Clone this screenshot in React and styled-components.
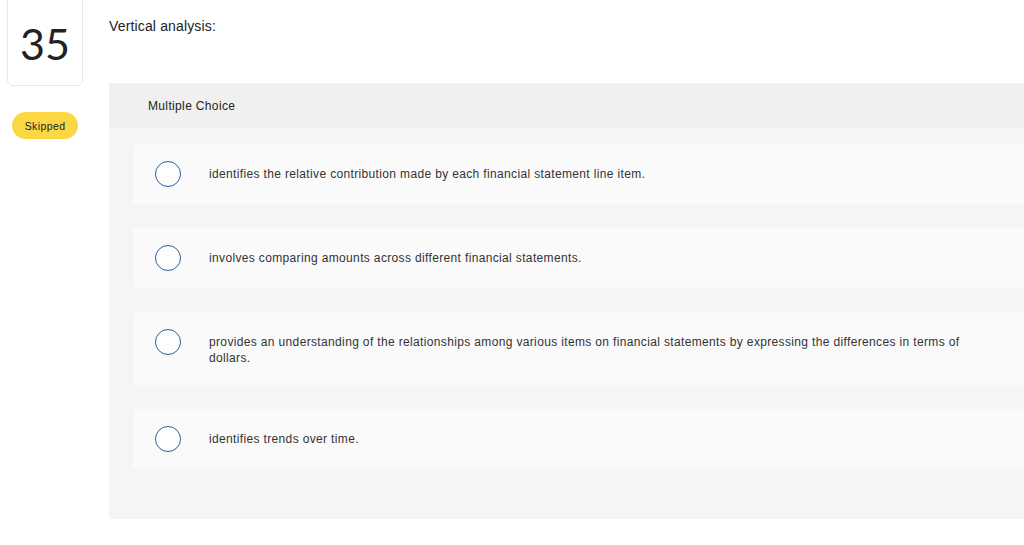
import React from 'react';
import styled, { createGlobalStyle } from 'styled-components';

const GlobalStyle = createGlobalStyle`
  html, body {
    margin: 0;
    padding: 0;
    background: #fff;
    overflow: hidden;
  }
  body {
    font-family: "Liberation Sans", Arial, sans-serif;
    color: #333;
  }
`;

const options = [
  'identifies the relative contribution made by each financial statement line item.',
  'involves comparing amounts across different financial statements.',
  'provides an understanding of the relationships among various items on financial statements by expressing the differences in terms of dollars.',
  'identifies trends over time.',
];

const App = () => {
  return (
    <>
      <GlobalStyle />
      <Page>
        <Side>
          <NumberCard>35</NumberCard>
          <StatusPill>Skipped</StatusPill>
        </Side>
        <Main>
          <Prompt>Vertical analysis:</Prompt>
          <Panel>
            <PanelHeader>Multiple Choice</PanelHeader>
            <OptionList>
              {options.map((text) => (
                <Option key={text}>
                  <Radio />
                  <OptionText>{text}</OptionText>
                </Option>
              ))}
            </OptionList>
          </Panel>
        </Main>
      </Page>
    </>
  );
};

export default App;

const Page = styled.div`
  display: flex;
  width: 1024px;
  height: 545px;
  overflow: hidden;
`;

const Side = styled.div`
  flex: 0 0 109px;
  display: flex;
  flex-direction: column;
  padding-left: 7px;
  box-sizing: border-box;
`;

const NumberCard = styled.div`
  width: 76px;
  height: 96px;
  margin-top: -10px;
  box-sizing: border-box;
  border: 1px solid #e6e6e6;
  border-radius: 6px;
  display: flex;
  align-items: center;
  justify-content: center;
  padding-top: 10px;
  font-family: "Lato", sans-serif;
  font-size: 43px;
  font-weight: 400;
  color: #222;
`;

const StatusPill = styled.div`
  margin: 26px 0 0 5px;
  width: 66px;
  height: 27px;
  border-radius: 14px;
  background: #fbd744;
  display: flex;
  align-items: center;
  justify-content: center;
  font-size: 10.5px;
  letter-spacing: 0.4px;
  color: #222;
`;

const Main = styled.div`
  flex: 0 0 960px;
  display: flex;
  flex-direction: column;
`;

const Prompt = styled.div`
  font-size: 14px;
  letter-spacing: 0.15px;
  line-height: 20px;
  padding-top: 16px;
  height: 83px;
  box-sizing: border-box;
  color: #222;
`;

const Panel = styled.div`
  background: #f5f5f5;
  border-radius: 3px;
  padding-bottom: 50px;
`;

const PanelHeader = styled.div`
  height: 45px;
  background: #f0f0f0;
  display: flex;
  align-items: center;
  padding-left: 39px;
  font-size: 12px;
  letter-spacing: 0.35px;
  color: #222;
`;

const OptionList = styled.div`
  display: flex;
  flex-direction: column;
  gap: 24px;
  padding: 16px 0 0 24px;
`;

const Option = styled.div`
  display: flex;
  align-items: flex-start;
  min-height: 60px;
  background: #fafafa;
  border-radius: 2px;
  padding: 17px 0 17px 22px;
  box-sizing: border-box;
`;

const Radio = styled.span`
  flex: 0 0 auto;
  width: 26px;
  height: 26px;
  box-sizing: border-box;
  border: 1px solid #2d5d9f;
  border-radius: 50%;
  background: #fff;
  margin-right: 28px;
`;

const OptionText = styled.div`
  max-width: 785px;
  font-size: 12px;
  letter-spacing: 0.35px;
  line-height: 16px;
  color: #333;
  padding: 5px 0 2px;
`;
